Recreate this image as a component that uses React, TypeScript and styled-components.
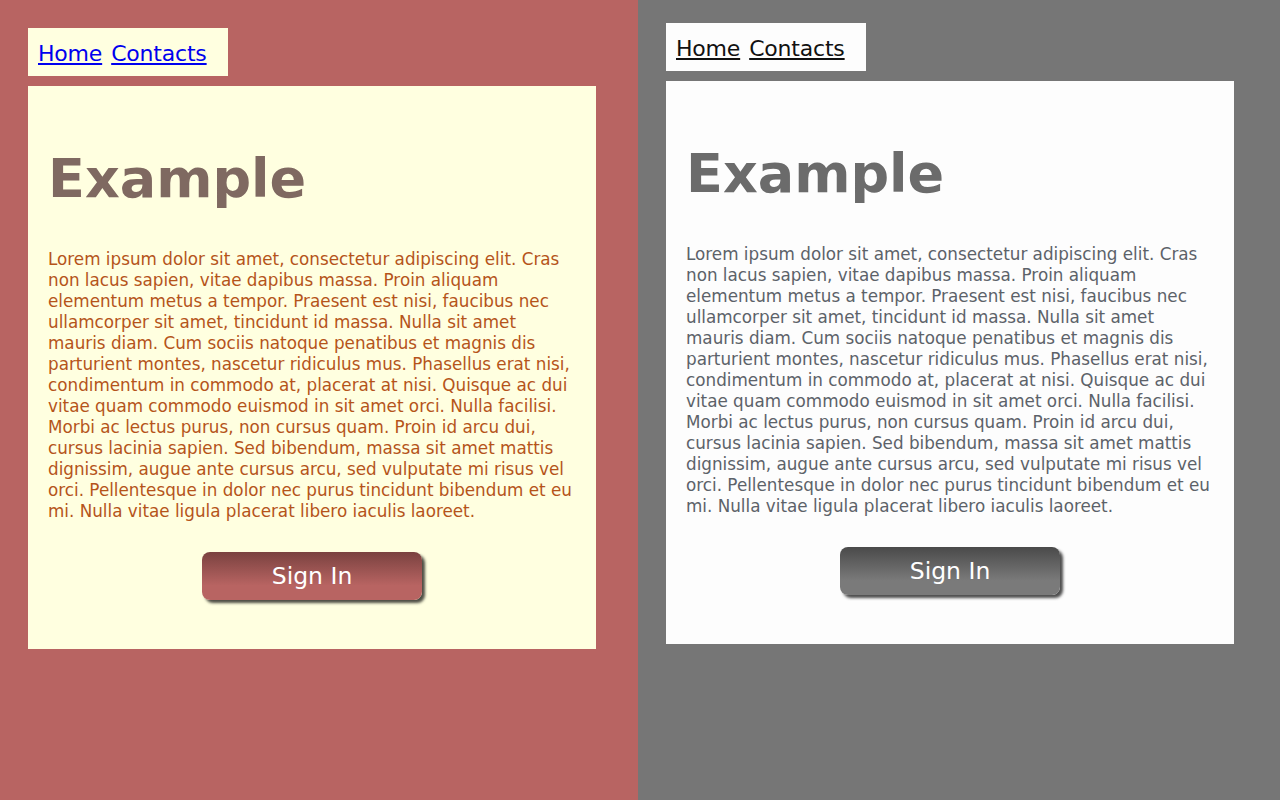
import React from "react";
import styled, { createGlobalStyle } from "styled-components";

const Global = createGlobalStyle`
  html, body { margin: 0; padding: 0; }
  body { font-family: "DejaVu Sans", Verdana, sans-serif; }
`;

type Theme = {
  bg: string;
  card: string;
  nav: string;
  link: string;
  heading: string;
  text: string;
  btnTop: string;
  btnBottom: string;
  top: number;
  width: number;
};

const red: Theme = {
  bg: "#b86462",
  card: "#ffffe0",
  nav: "#ffffe0",
  link: "#0000ee",
  heading: "#7f6961",
  text: "#b5541a",
  btnTop: "#7a4240",
  btnBottom: "#b86462",
  top: 28,
  width: 638,
};

const gray: Theme = {
  bg: "#767676",
  card: "#fdfdfd",
  nav: "#fdfdfd",
  link: "#111111",
  heading: "#6b6b6b",
  text: "#5c6269",
  btnTop: "#4a4a4a",
  btnBottom: "#7a7a7a",
  top: 23,
  width: 642,
};

const Page = styled.div`
  display: flex;
  width: 1280px;
  height: 800px;
  overflow: hidden;
`;

const Panel = styled.section<{ $t: Theme }>`
  box-sizing: border-box;
  width: ${(p) => p.$t.width}px;
  height: 800px;
  background: ${(p) => p.$t.bg};
  padding: ${(p) => p.$t.top}px 28px 0 28px;
  display: flex;
  flex-direction: column;
  align-items: flex-start;
  gap: 10px;
`;

const Nav = styled.nav<{ $t: Theme }>`
  box-sizing: border-box;
  width: 200px;
  height: 48px;
  background: ${(p) => p.$t.nav};
  padding: 13px 10px 0 10px;
  display: flex;
  gap: 9px;
  font-size: 22px;
  line-height: 26px;
  letter-spacing: -0.2px;
`;

const NavLink = styled.a<{ $t: Theme }>`
  color: ${(p) => p.$t.link};
  text-decoration: underline;
  cursor: pointer;
`;

const Card = styled.main<{ $t: Theme }>`
  box-sizing: border-box;
  width: 568px;
  height: 563px;
  background: ${(p) => p.$t.card};
  padding: 20px;
  display: flex;
  flex-direction: column;
`;

const Heading = styled.h1<{ $t: Theme }>`
  margin: 41px 0 0 0;
  font-size: 54px;
  font-weight: bold;
  color: ${(p) => p.$t.heading};
  line-height: 1.2;
`;

const Text = styled.p<{ $t: Theme }>`
  margin: 37px 0 0 0;
  font-size: 16.8px;
  line-height: 21px;
  color: ${(p) => p.$t.text};
`;

const Button = styled.button<{ $t: Theme }>`
  align-self: center;
  margin-top: 30px;
  width: 220px;
  height: 48px;
  border: none;
  border-radius: 8px;
  background: linear-gradient(to bottom, ${(p) => p.$t.btnTop} 0%, ${(p) => p.$t.btnBottom} 70%);
  box-shadow: 3px 3px 3px rgba(0, 0, 0, 0.7);
  color: #ffffff;
  font-family: "DejaVu Sans", Verdana, sans-serif;
  font-size: 23.5px;
  cursor: pointer;
`;

const LOREM =
  "Lorem ipsum dolor sit amet, consectetur adipiscing elit. Cras non lacus sapien, vitae dapibus massa. Proin aliquam elementum metus a tempor. Praesent est nisi, faucibus nec ullamcorper sit amet, tincidunt id massa. Nulla sit amet mauris diam. Cum sociis natoque penatibus et magnis dis parturient montes, nascetur ridiculus mus. Phasellus erat nisi, condimentum in commodo at, placerat at nisi. Quisque ac dui vitae quam commodo euismod in sit amet orci. Nulla facilisi. Morbi ac lectus purus, non cursus quam. Proin id arcu dui, cursus lacinia sapien. Sed bibendum, massa sit amet mattis dignissim, augue ante cursus arcu, sed vulputate mi risus vel orci. Pellentesque in dolor nec purus tincidunt bibendum et eu mi. Nulla vitae ligula placerat libero iaculis laoreet.";

const Side: React.FC<{ t: Theme }> = ({ t }) => (
  <Panel $t={t}>
    <Nav $t={t}>
      <NavLink $t={t}>Home</NavLink>
      <NavLink $t={t}>Contacts</NavLink>
    </Nav>
    <Card $t={t}>
      <Heading $t={t}>Example</Heading>
      <Text $t={t}>{LOREM}</Text>
      <Button $t={t}>Sign In</Button>
    </Card>
  </Panel>
);

export default function App() {
  return (
    <>
      <Global />
      <Page>
        <Side t={red} />
        <Side t={gray} />
      </Page>
    </>
  );
}
